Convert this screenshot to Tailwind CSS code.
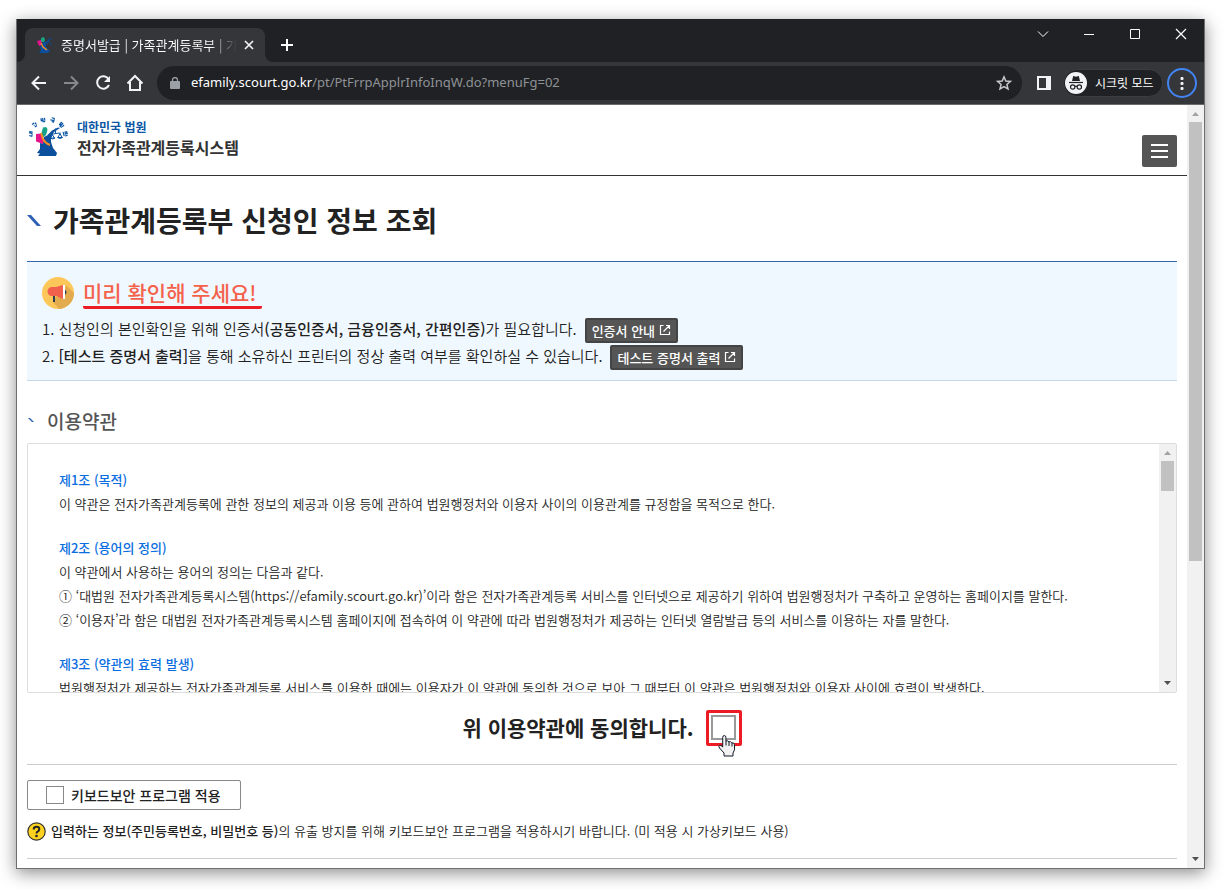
<!DOCTYPE html>
<html lang="ko">
<head>
<meta charset="utf-8">
<title>증명서발급 | 가족관계등록부</title>
<script src="https://cdn.jsdelivr.net/npm/@tailwindcss/browser@4"></script>
</head>
<body class="flex h-screen flex-col overflow-hidden bg-white pt-[19px] pr-5 pb-[21px] pl-4 font-['Noto_Sans_CJK_KR',sans-serif] text-[#222]">
<div class="flex min-h-0 flex-1 flex-col border-x border-b border-[#6f6f6f] shadow-[0_4px_16px_rgba(0,0,0,0.45)]">

  <!-- Tab strip -->
  <header class="shrink-0 bg-[#202124]">
    <div class="flex h-[43px] items-end">
      <div class="relative ml-2 flex h-[34px] w-60 items-center rounded-t-lg bg-[#35363a] pr-2 pl-3 text-[13px] text-white">
        <svg class="absolute bottom-0 -left-2 size-2" viewBox="0 0 8 8"><path d="M8 0v8H0a8 8 0 0 0 8-8z" fill="#35363a"/></svg>
        <svg class="absolute -right-2 bottom-0 size-2" viewBox="0 0 8 8"><path d="M0 0v8h8a8 8 0 0 1-8-8z" fill="#35363a"/></svg>
        <svg class="mr-2 size-4 shrink-0" viewBox="0 0 16 16"><path d="M4 1l3-1 1 3-1 2-3 0z" fill="#18a383"/><path d="M0 4l4-1 1 5-3 1z" fill="#e5128c"/><path d="M6 5l3 0 4-4h2l-4 3-2 3 0 3 4 4-2 2H2l2-3-1-3z" fill="#0a4f9e"/><path d="M4 6l2 4 4 3" stroke="#f08a24" stroke-width="1.500" fill="none"/><path d="M9 5h4M9 7h2M13 7h2M12 3v2" stroke="#0a4f9e"/></svg>
        <span class="w-44 overflow-hidden bg-linear-to-r from-white from-85% to-[#35363a] bg-clip-text pb-px whitespace-nowrap text-transparent">증명서발급 | 가족관계등록부 | 가</span>
        <button class="ml-auto grid size-4 shrink-0 place-items-center" aria-label="탭 닫기"><svg class="size-4" viewBox="0 0 16 16" fill="none" stroke="#f1f3f4" stroke-width="1.700"><path d="M4 4l8 8M12 4l-8 8"/></svg></button>
      </div>
      <button class="mb-[7px] ml-3 grid size-5 place-items-center" aria-label="새 탭"><svg class="size-4" viewBox="0 0 16 16" fill="none" stroke="#fff" stroke-width="2"><path d="M8 2v12M2 8h12"/></svg></button>
      <div class="ml-auto flex self-start text-white">
        <button class="grid h-[30px] w-[46px] place-items-center" aria-label="탭 검색"><svg class="size-3" viewBox="0 0 12 12" fill="none" stroke="currentColor"><path d="M1 3.500l5 5 5-5"/></svg></button>
        <button class="grid h-[30px] w-[46px] place-items-center" aria-label="최소화"><svg class="size-3" viewBox="0 0 12 12" fill="none" stroke="currentColor"><path d="M1 6.500h10"/></svg></button>
        <button class="grid h-[30px] w-[46px] place-items-center" aria-label="최대화"><svg class="size-3" viewBox="0 0 12 12" fill="none" stroke="currentColor"><path d="M1.500 1.500h9v9h-9z"/></svg></button>
        <button class="grid h-[30px] w-[46px] place-items-center" aria-label="닫기"><svg class="size-3" viewBox="0 0 12 12" fill="none" stroke="currentColor" stroke-width="1.200"><path d="M1 1l10 10M11 1L1 11"/></svg></button>
      </div>
    </div>

    <!-- Toolbar -->
    <div class="flex h-[43px] items-center border-b border-[#6b6b6b] bg-[#35363a] pr-[7px] pl-3">
      <nav class="flex gap-3">
        <button aria-label="뒤로"><svg class="size-5" viewBox="0 0 20 20" fill="none" stroke="#f1f3f4" stroke-width="2"><path d="M17 10H4M10 3.500L3.500 10l6.500 6.500"/></svg></button>
        <button aria-label="앞으로"><svg class="size-5" viewBox="0 0 20 20" fill="none" stroke="#86888a" stroke-width="2"><path d="M3 10h13M10 3.500l6.500 6.500-6.500 6.500"/></svg></button>
        <button aria-label="새로고침"><svg class="size-5" viewBox="0 0 20 20" fill="none" stroke="#f1f3f4" stroke-width="2"><path d="M15.500 6A6.200 6.200 0 1 0 16 12"/><path d="M17 3v6h-6z" fill="#f1f3f4" stroke="none"/></svg></button>
        <button aria-label="홈"><svg class="size-5" viewBox="0 0 20 20" fill="none" stroke="#f1f3f4" stroke-width="2"><path d="M2.500 10.500L10 3l7.500 7.500M5 9v8h10V9"/></svg></button>
      </nav>
      <div class="ml-3 flex h-[34px] flex-1 items-center rounded-full bg-[#202124] pr-2 pl-[13px]">
        <svg class="mr-[11px] h-3 w-[10px] shrink-0" viewBox="0 0 10 12"><rect y="4" width="10" height="8" rx="1" fill="#9aa0a6"/><path d="M2.500 5V3a2.500 2.500 0 0 1 5 0v2" fill="none" stroke="#9aa0a6" stroke-width="1.300"/></svg>
        <p class="flex-1 font-['Noto_Sans',sans-serif] text-[13px] whitespace-nowrap text-[#8f9296]"><span class="text-white">efamily.scourt.go.kr</span>/pt/PtFrrpApplrInfoInqW.do?menuFg=02</p>
        <button aria-label="북마크"><svg class="size-5" viewBox="0 0 20 20" fill="none" stroke="#c6c8ca" stroke-width="1.500"><path d="M10 3.800l1.800 4.200 4.600.4-3.500 3 1.100 4.500-4-2.400-4 2.400 1.100-4.500-3.500-3 4.600-.4z"/></svg></button>
      </div>
      <button class="ml-[15px]" aria-label="사이드 패널"><svg class="size-[14px]" viewBox="0 0 14 14"><path fill-rule="evenodd" d="M0 0h14v14H0zM2 2v10h7V2z" fill="#f1f3f4"/></svg></button>
      <button class="ml-3 flex h-7 w-[100px] items-center rounded-full border border-[#3c3d41] bg-[#202124] pl-px text-[12px] whitespace-nowrap text-white">
        <svg class="mr-2 size-[22px] shrink-0" viewBox="0 0 22 22"><circle cx="11" cy="11" r="11" fill="#f1f3f4"/><path d="M7 9l1.200-5 2.800.8 2.800-.8L15 9z" fill="#202124"/><path d="M4 10.500h14" stroke="#202124" stroke-width="1.200"/><g fill="none" stroke="#202124" stroke-width="1.200"><circle cx="7.700" cy="15" r="2.200"/><circle cx="14.300" cy="15" r="2.200"/><path d="M10 14.500q1-.7 2 0"/></g></svg>시크릿 모드</button>
      <button class="ml-1 grid size-[30px] shrink-0 place-items-center rounded-full border-2 border-[#4285f4]" aria-label="메뉴"><svg class="h-4 w-4" viewBox="0 0 16 16" fill="#f1f3f4"><rect x="6.500" y="2" width="3" height="3" rx="1"/><rect x="6.500" y="7" width="3" height="3" rx="1"/><rect x="6.500" y="12" width="3" height="3" rx="1"/></svg></button>
    </div>
  </header>

  <div class="flex min-h-0 flex-1 bg-white">
    <div class="min-w-0 flex-1 overflow-hidden">
      <!-- Site header -->
      <div class="flex h-[71px] items-start justify-between border-b border-[#333] px-[10px] pt-[10px]">
        <a href="#" class="flex">
          <svg class="mr-2 h-11 w-[42px]" viewBox="0 0 42 44">
            <g fill="none" stroke="#0b57a4" stroke-width="1.300">
              <g transform="translate(3.500 19) rotate(-75) scale(.9)"><path d="M-2-1v3h2M1-2v4M2.500-2v4M1 0h1.500"/></g>
              <g transform="translate(7.500 10) rotate(-35) scale(.9)"><path d="M-2-2h3M0 0h-1M2-2v3M-1 2h3"/></g>
              <g transform="translate(16 5) rotate(-12) scale(.9)"><path d="M-2-1.500h2v2h-2zM2-2v3M-1 2h3"/></g>
              <g transform="translate(26 5) rotate(15) scale(.9)"><path d="M-2-2h3v1.500M-3 .5h5M-1 2h2v1"/></g>
              <g transform="translate(34.500 10) rotate(40) scale(.9)"><path d="M-2-2v3h2v-3zM-2 0h2M2-2v3M-1 2h3"/></g>
              <g transform="translate(38.500 19) rotate(75) scale(.9)"><path d="M-2-2h2v2h-2zM-3 2h5M2-2v3"/></g>
            </g>
            <path d="M15 16l1-3.500 3-.5 1.500 2-.5 3-1 3-2.500 2L14 20z" fill="#17a188"/>
            <path d="M9 19l5-.5 3 6-1 5-4-2-3-1z" fill="#e4148c"/>
            <path d="M17 22l3-1.500 5-5 6-3 2 .5-6 4-3 5 0 5 2 6 4 5-1 3H11l2-2.500-3-.5 3-4 0-6 3 1z" fill="#0b4f9d"/>
            <path d="M14 18l2 6q2.500 4.500 7 6" fill="none" stroke="#f28b20" stroke-width="2"/>
            <path d="M28.500 13.500V19M24.500 19.500l4-1 5-.5M25.500 20l-2 3M25.500 20l2 3M33 18.500l-2 4M33 18.500l2 4M23 23q2.500 2 5 0zM30.500 22.500q2.500 2 5 0z" fill="none" stroke="#0b57a4" stroke-width="1"/>
          </svg>
          <span class="flex flex-col pt-[3px]">
            <span class="text-[12px] leading-[18px] font-bold text-[#0b57a4]">대한민국 법원</span>
            <span class="text-[16px] leading-[22px] font-bold text-[#333]">전자가족관계등록시스템</span>
          </span>
        </a>
        <button class="mt-5 grid h-8 w-[35px] place-items-center rounded-xs bg-[#555]" aria-label="전체 메뉴"><svg class="h-4 w-[17px]" viewBox="0 0 17 16" stroke="#fff" stroke-width="2"><path d="M0 2h17M0 8h17M0 14h17"/></svg></button>
      </div>

      <main class="px-[10px]">
        <h1 class="flex h-[85px] items-center pt-[3px] text-[28px] leading-10 font-bold">
          <svg class="mr-3 h-[11px] w-[14px] shrink-0" viewBox="0 0 14 11"><path d="M0 0h4l10 11h-4z" fill="#2f62b4"/></svg>가족관계등록부 신청인 정보 조회</h1>

        <section class="h-[120px] border-t border-b border-t-[#3568b0] border-b-[#c5d9ec] bg-[#f0f8ff] px-[15px] pt-[15px] text-[15px] font-[350]">
          <h2 class="flex h-[39px] items-start text-[21px] leading-8 font-medium text-[#f4624c]">
            <svg class="mr-[9px] size-8 shrink-0" viewBox="0 0 32 32"><defs><clipPath id="disc"><circle cx="16" cy="16" r="16"/></clipPath></defs><circle cx="16" cy="16" r="16" fill="#fdc75a"/><path clip-path="url(#disc)" d="M11 25l7 8h14V16l-8-8-3 12-7 0z" fill="#e2ab4d"/><path d="M21 8v14l-7-3h-4a4.500 4.500 0 0 1 0-9h4z" fill="#f0604d"/><path d="M21 8h2v14h-2z" fill="#fff"/><path d="M23 13q3 2 0 5z" fill="#2c3e55"/><path d="M11 19h2v6h-2z" fill="#2c3e55"/></svg>
            <span class="h-8 rounded-xs border-b-3 border-[#ec1c24] pr-[5px] leading-[30px]">미리 확인해 주세요!</span>
          </h2>
          <div class="flex h-[27px] items-center justify-start gap-2 whitespace-nowrap">
            <p>1. 신청인의 본인확인을 위해 인증서<b class="font-medium">(공동인증서, 금융인증서, 간편인증)</b>가 필요합니다.</p>
            <button class="mt-0.5 flex h-[25px] items-center gap-1 rounded-xs border-2 border-[#444] bg-[#555] px-[5px] text-[13px] font-medium text-white">인증서 안내<svg class="mb-0.5 size-3" viewBox="0 0 12 12" fill="none" stroke="#fff" stroke-width="1.200"><path d="M4.500 1.500h-3v9h9v-3M4.500 7.500l6-6M7 1.500h3.500V5"/></svg></button>
          </div>
          <div class="flex h-[27px] items-center justify-start gap-2 whitespace-nowrap">
            <p>2. <b class="font-medium">[테스트 증명서 출력]</b>을 통해 소유하신 프린터의 정상 출력 여부를 확인하실 수 있습니다.</p>
            <button class="mt-0.5 flex h-[25px] items-center gap-1 rounded-xs border-2 border-[#444] bg-[#555] px-[5px] text-[13px] font-medium text-white">테스트 증명서 출력<svg class="mb-0.5 size-3" viewBox="0 0 12 12" fill="none" stroke="#fff" stroke-width="1.200"><path d="M4.500 1.500h-3v9h9v-3M4.500 7.500l6-6M7 1.500h3.500V5"/></svg></button>
          </div>
        </section>

        <h2 class="flex h-[62px] items-end pb-2 text-[19px] leading-7 font-medium text-[#555]"><svg class="mr-[13px] mb-3 ml-px h-1.5 w-1.5" viewBox="0 0 6 6"><path d="M0 1h2l4 4H4z" fill="#2f62b4"/></svg>이용약관</h2>

        <section class="flex h-[250px] rounded-xs border border-[#ddd]">
          <div class="min-w-0 flex-1 space-y-5 overflow-hidden pt-6 pl-[31px] text-[13px] leading-6 font-[350] whitespace-nowrap">
            <div><h3 class="font-medium text-[#0a6ee0]">제1조 (목적)</h3>
              <p>이 약관은 전자가족관계등록에 관한 정보의 제공과 이용 등에 관하여 법원행정처와 이용자 사이의 이용관계를 규정함을 목적으로 한다.</p></div>
            <div><h3 class="font-medium text-[#0a6ee0]">제2조 (용어의 정의)</h3>
              <p>이 약관에서 사용하는 용어의 정의는 다음과 같다.</p>
              <p>① ‘대법원 전자가족관계등록시스템(https://efamily.scourt.go.kr)’이라 함은 전자가족관계등록 서비스를 인터넷으로 제공하기 위하여 법원행정처가 구축하고 운영하는 홈페이지를 말한다.</p>
              <p>② ‘이용자’라 함은 대법원 전자가족관계등록시스템 홈페이지에 접속하여 이 약관에 따라 법원행정처가 제공하는 인터넷 열람발급 등의 서비스를 이용하는 자를 말한다.</p></div>
            <div><h3 class="font-medium text-[#0a6ee0]">제3조 (약관의 효력 발생)</h3>
              <p>법원행정처가 제공하는 전자가족관계등록 서비스를 이용한 때에는 이용자가 이 약관에 동의한 것으로 보아 그 때부터 이 약관은 법원행정처와 이용자 사이에 효력이 발생한다.</p></div>
          </div>
          <div class="flex w-[17px] flex-col items-center bg-[#f1f1f1]">
            <svg class="h-[17px] w-[17px]" viewBox="0 0 17 17"><path d="M5 11l3.500-4 3.500 4z" fill="#a3a3a3"/></svg>
            <div class="h-[30px] w-[13px] bg-[#c1c1c1]"></div>
            <svg class="mt-auto h-[17px] w-[17px]" viewBox="0 0 17 17"><path d="M5 6l3.500 4L12 6z" fill="#505050"/></svg>
          </div>
        </section>

        <div class="flex h-[72px] items-center justify-center gap-3 border-b border-[#ccc] pb-0.5 text-[21px] font-bold">
          <label for="agree">위 이용약관에 동의합니다.</label>
          <span class="relative grid size-9 place-items-center rounded-xs border-3 border-[#ec1c24]">
            <input id="agree" type="checkbox" class="size-[25px] appearance-none border-2 border-[#999] bg-white">
            <svg class="absolute top-[22px] left-[9px] h-[22px] w-[18px]" viewBox="0 0 18 22"><path d="M6 20.500V18L1.500 13q-1.200-2 0-2.700 1.300-.6 3.200 1.700V2.500q0-2 1.600-2t1.600 2V6q2-.8 3 .8 2-.6 2.800 1 2.800-.5 2.800 2v5L15 18v3H6z" fill="#f2f2f2" stroke="#111827"/><path d="M8 6v4.500M11 7v4M14 8v3.500" stroke="#111827" fill="none"/></svg>
          </span>
        </div>

        <div class="mt-[15px] flex">
          <label class="flex h-[30px] w-[214px] items-center gap-[7px] rounded-xs border border-[#888] pl-[18px] text-[14px] font-medium whitespace-nowrap"><input type="checkbox" class="size-[18px] appearance-none border border-[#888] bg-white">키보드보안 프로그램 적용</label>
        </div>
        <div class="flex h-[49px] items-start gap-[5px] border-b border-[#ccc] pt-3 text-[13px] leading-[18px] font-[350] whitespace-nowrap">
          <svg class="size-[19px] shrink-0" viewBox="0 0 19 19"><circle cx="9.500" cy="9.500" r="8.700" fill="#fdd31f" stroke="#333" stroke-width="1.200"/><path d="M6.700 7.500q0-2.700 2.800-2.700t2.800 2.400q0 1.300-1.400 2.200-1.400.8-1.400 2.100" fill="none" stroke="#222" stroke-width="2"/><circle cx="9.500" cy="14" r="1.300" fill="#222"/></svg>
          <p><b class="font-medium">입력하는 정보(주민등록번호, 비밀번호 등)</b>의 유출 방지를 위해 키보드보안 프로그램을 적용하시기 바랍니다. (미 적용 시 가상키보드 사용)</p>
        </div>
      </main>
    </div>

    <!-- Page scrollbar -->
    <div class="flex w-[17px] shrink-0 flex-col items-center bg-[#f1f1f1]">
      <svg class="h-[17px] w-[17px] shrink-0" viewBox="0 0 17 17"><path d="M5 11l3.500-4 3.500 4z" fill="#a3a3a3"/></svg>
      <div class="h-[439px] w-[13px] bg-[#c1c1c1]"></div>
      <svg class="mt-auto h-[17px] w-[17px] shrink-0" viewBox="0 0 17 17"><path d="M5 6l3.500 4L12 6z" fill="#505050"/></svg>
    </div>
  </div>
</div>
</body>
</html>
